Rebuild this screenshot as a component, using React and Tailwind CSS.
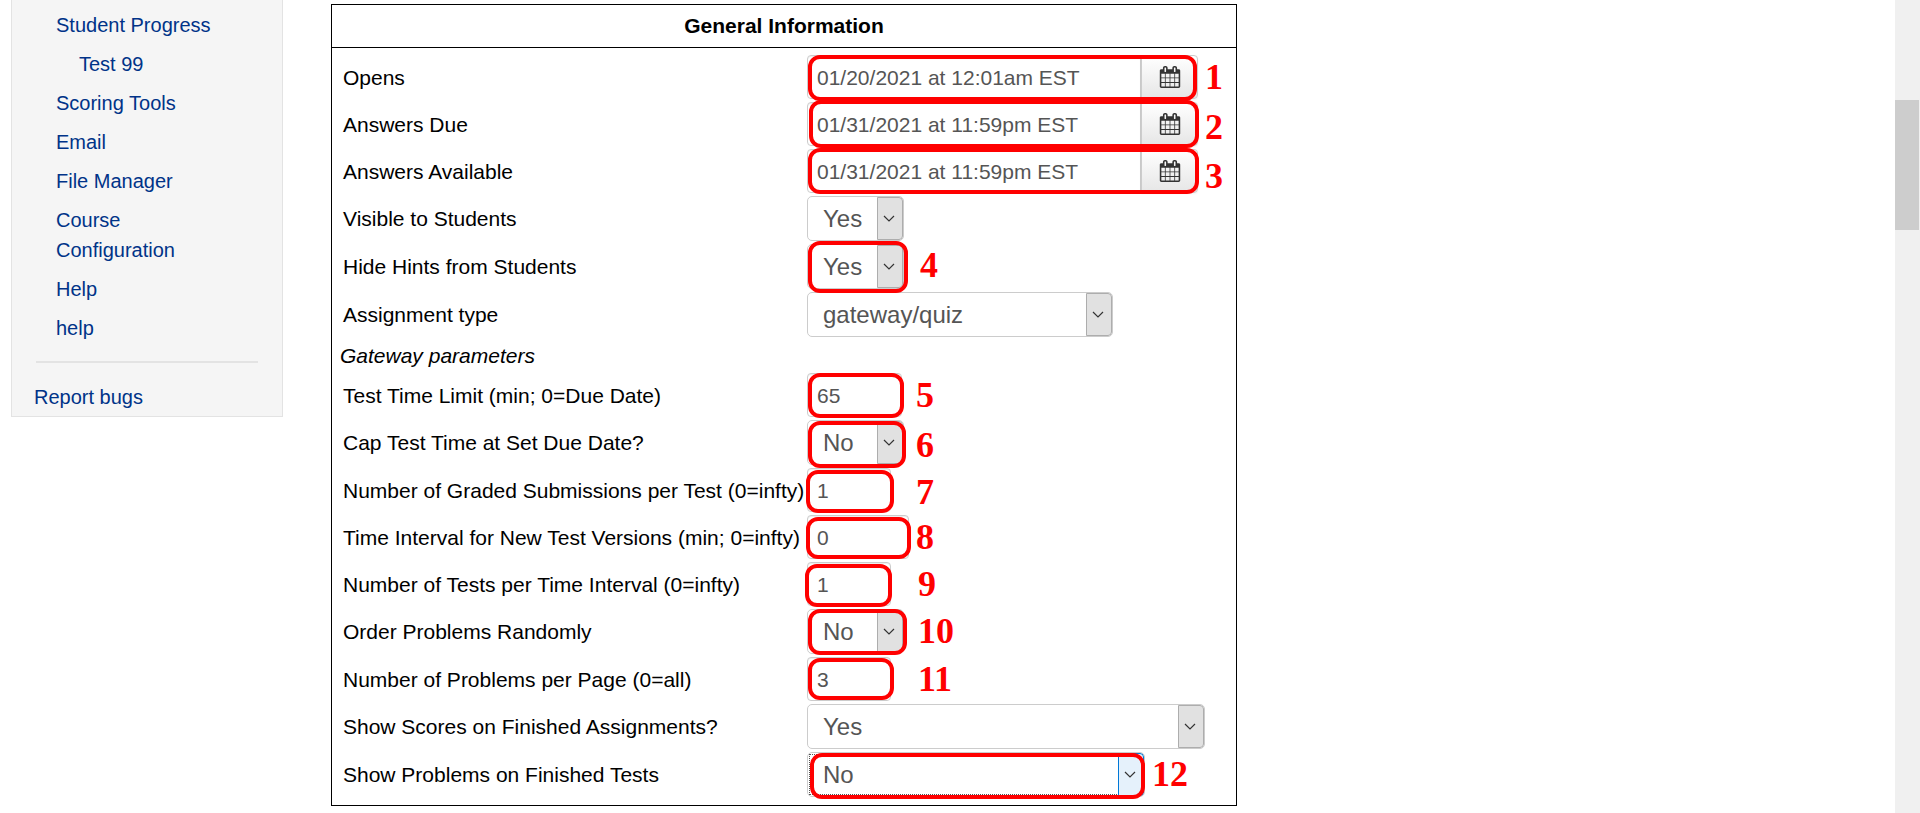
import React from "react";

const links = [
  { text: "Student Progress" },
  { text: "Test 99", nested: true },
  { text: "Scoring Tools" },
  { text: "Email" },
  { text: "File Manager" },
  { text: "Course Configuration" },
  { text: "Help" },
  { text: "help" },
];

const rows = [
  {
    id: "opens", label: "Opens", kind: "date", value: "01/20/2021 at 12:01am EST",
    mark: { n: 1, box: "left-px top-0 w-[389px] h-[46px]", num: "left-[398px] top-0" },
  },
  {
    id: "due", label: "Answers Due", kind: "date", value: "01/31/2021 at 11:59pm EST",
    mark: { n: 2, box: "left-0.5 -top-0.5 w-[390px] h-12", num: "left-[398px] top-[3px]" },
  },
  {
    id: "available", label: "Answers Available", kind: "date", value: "01/31/2021 at 11:59pm EST",
    mark: { n: 3, box: "left-px -top-px w-[391px] h-[46px]", num: "left-[398px] top-[5px]" },
  },
  { id: "visible", label: "Visible to Students", kind: "select", value: "Yes", width: "w-[97px]" },
  {
    id: "hints", label: "Hide Hints from Students", kind: "select", value: "Yes", width: "w-[97px]",
    mark: { n: 4, box: "left-px -top-[3px] w-[100px] h-[52px]", num: "left-[113px] -top-px" },
  },
  {
    id: "type", label: "Assignment type", kind: "select", value: "gateway/quiz", width: "w-[306px]",
    options: ["gateway/quiz", "homework"],
  },
  { id: "gateway", heading: "Gateway parameters" },
  {
    id: "limit", label: "Test Time Limit (min; 0=Due Date)", kind: "text", value: "65", width: "w-[95px]",
    mark: { n: 5, box: "left-px top-0 w-24 h-[45px]", num: "left-[109px] top-0" },
  },
  {
    id: "cap", label: "Cap Test Time at Set Due Date?", kind: "select", value: "No", width: "w-[97px]",
    mark: { n: 6, box: "left-px top-px w-[98px] h-[47px]", num: "left-[109px] top-[3px]" },
  },
  {
    id: "graded", label: "Number of Graded Submissions per Test (0=infty)", kind: "text", value: "1", width: "w-[84px]",
    mark: { n: 7, box: "-left-px top-0.5 w-[88px] h-[43px]", num: "left-[109px] top-0.5" },
  },
  {
    id: "interval", label: "Time Interval for New Test Versions (min; 0=infty)", kind: "text", value: "0", width: "w-[102px]",
    mark: { n: 8, box: "-left-px top-0.5 w-[105px] h-[42px]", num: "left-[109px] top-0" },
  },
  {
    id: "tests", label: "Number of Tests per Time Interval (0=infty)", kind: "text", value: "1", width: "w-[84px]",
    mark: { n: 9, box: "-left-0.5 top-0.5 w-[87px] h-[43px]", num: "left-[111px] top-0" },
  },
  {
    id: "order", label: "Order Problems Randomly", kind: "select", value: "No", width: "w-[97px]",
    mark: { n: 10, box: "left-px top-0 w-[99px] h-[46px]", num: "left-[111px] top-0" },
  },
  {
    id: "perpage", label: "Number of Problems per Page (0=all)", kind: "text", value: "3", width: "w-[84px]",
    mark: { n: 11, box: "left-px top-px w-[86px] h-[42px]", num: "left-[111px] top-0" },
  },
  {
    id: "scores", label: "Show Scores on Finished Assignments?", kind: "select", value: "Yes", width: "w-[398px]",
  },
  {
    id: "problems", label: "Show Problems on Finished Tests", kind: "select", value: "No", width: "w-[338px]", active: true,
    mark: { n: 12, box: "left-[3px] top-px w-[335px] h-[46px]", num: "left-[345px] top-0" },
  },
];

function CalendarIcon() {
  return (
    <svg viewBox="0 0 1792 1792" className="size-[22px] fill-[#333]" aria-hidden="true">
      <path d="M192 1664h288v-288h-288v288zm352 0h320v-288h-320v288zm-352-352h288v-320h-288v320zm352 0h320v-320h-320v320zm-352-384h288v-288h-288v288zm736 736h320v-288h-320v288zm-384-736h320v-288h-320v288zm768 736h288v-288h-288v288zm-384-352h320v-320h-320v320zm-352-864v-288q0-13-9.5-22.5t-22.5-9.5h-64q-13 0-22.5 9.5t-9.5 22.5v288q0 13 9.5 22.5t22.5 9.5h64q13 0 22.5-9.5t9.5-22.5zm736 864h288v-320h-288v320zm-384-384h320v-288h-320v288zm384 0h288v-288h-288v288zm32-480v-288q0-13-9.5-22.5t-22.5-9.5h-64q-13 0-22.5 9.5t-9.5 22.5v288q0 13 9.5 22.5t22.5 9.5h64q13 0 22.5-9.5t9.5-22.5zm384-64v1280q0 52-38 90t-90 38h-1408q-52 0-90-38t-38-90v-1280q0-52 38-90t90-38h128v-96q0-66 47-113t113-47h64q66 0 113 47t47 113v96h384v-96q0-66 47-113t113-47h64q66 0 113 47t47 113v96h128q52 0 90 38t38 90z" />
    </svg>
  );
}

function DateField({ id, value }) {
  return (
    <div className="flex h-[44px] w-[391px]">
      <input
        id={id}
        type="text"
        defaultValue={value}
        className="min-w-0 flex-1 rounded-l border border-[#ccc] bg-white px-[9px] pt-0.5 text-[21px] text-[#555] shadow-[inset_0_1px_1px_rgba(0,0,0,0.075)] outline-none"
      />
      <button
        type="button"
        aria-label="Pick a date"
        className="flex w-[57px] items-center justify-center rounded-r border border-[#ccc] bg-linear-to-b from-white to-[#e6e6e6] shadow-[0_1px_2px_rgba(0,0,0,0.05)]"
      >
        <CalendarIcon />
      </button>
    </div>
  );
}

function SelectField({ id, value, width, options, active }) {
  return (
    <div className={`relative h-[45px] ${width}`}>
      <select
        id={id}
        defaultValue={value}
        className="block size-full appearance-none rounded-[5px] border border-[#ccc] bg-white pt-px pr-7 pl-[15px] text-2xl text-[#555] outline-none"
      >
        {(options || ["Yes", "No"]).map((o) => (
          <option key={o}>{o}</option>
        ))}
      </select>
      {active && <span className="pointer-events-none absolute inset-0.5 border border-dotted border-[#555]" />}
      <span
        className={`pointer-events-none absolute inset-y-px right-px flex w-[26px] items-center justify-center rounded-r border pr-0.5 ${
          active ? "border-[#0078d7] bg-[#e5f1fb]" : "border-[#adadad] bg-[#e1e1e1]"
        }`}
      >
        <svg viewBox="0 0 12 8" className="h-2 w-3 fill-none stroke-[#333]" aria-hidden="true">
          <path d="M1 1l5 5 5-5" strokeWidth="1.2" />
        </svg>
      </span>
    </div>
  );
}

function TextField({ id, value, width }) {
  return (
    <input
      id={id}
      type="text"
      defaultValue={value}
      className={`block h-[44px] rounded border border-[#ccc] bg-white px-[9px] pt-0.5 text-[21px] text-[#555] shadow-[inset_0_1px_1px_rgba(0,0,0,0.075)] outline-none ${width}`}
    />
  );
}

function Mark({ n, box, num }) {
  return (
    <>
      <span className={`pointer-events-none absolute z-10 rounded-xl border-4 border-[#f00] ${box}`} />
      <span
        className={`pointer-events-none absolute z-10 font-['Palatino_Linotype','Book_Antiqua','Liberation_Serif',serif] text-4xl leading-[44px] font-bold text-[#f00] ${num}`}
      >
        {n}
      </span>
    </>
  );
}

function Row({ row }) {
  if (row.heading) {
    return (
      <tr>
        <td colSpan={2} className="h-[33px] italic">
          {row.heading}
        </td>
      </tr>
    );
  }
  return (
    <tr>
      <td className="w-[467px] pl-[3px] whitespace-nowrap">
        <label htmlFor={row.id}>{row.label}</label>
      </td>
      <td className="pt-px pb-0.5">
        <div className="relative">
          {row.kind === "date" && <DateField {...row} />}
          {row.kind === "select" && <SelectField {...row} />}
          {row.kind === "text" && <TextField {...row} />}
          {row.mark && <Mark {...row.mark} />}
        </div>
      </td>
    </tr>
  );
}

export default function App() {
  return (
    <div className="flex min-h-screen bg-white font-['Liberation_Sans',Arial,sans-serif] text-black">
      <aside className="ml-[11px] w-[272px] shrink-0 self-start border border-t-0 border-[#e3e3e3] bg-[#f5f5f5] pt-2.5 pb-1 text-xl leading-[30px] text-[#038]">
        <nav>
          <ul className="ml-11 flex w-44 flex-col gap-[9px]">
            {links.map((l) => (
              <li key={l.text} className={l.nested ? "pl-[23px]" : ""}>
                <a href="#">{l.text}</a>
              </li>
            ))}
          </ul>
          <hr className="mx-6 mt-[18px] mb-[19px] border-t-2 border-[#e3e3e3]" />
          <a href="#" className="ml-[22px] block">
            Report bugs
          </a>
        </nav>
      </aside>

      <main className="ml-12 min-w-0 flex-1 pt-1">
        <section className="w-full max-w-[906px] border border-black text-[21px] leading-[30px]">
          <h2 className="flex h-[43px] items-center justify-center border-b border-black font-bold">
            General Information
          </h2>
          <div className="px-2 py-1.5">
            <table className="w-full border-separate border-spacing-0">
              <tbody>
                {rows.map((r) => (
                  <Row key={r.id} row={r} />
                ))}
              </tbody>
            </table>
          </div>
        </section>
      </main>

      <div className="w-[25px] shrink-0 bg-[#f0f0f0] pt-[100px] pr-px" aria-hidden="true">
        <div className="h-[130px] bg-[#cdcdcd]" />
      </div>
    </div>
  );
}
